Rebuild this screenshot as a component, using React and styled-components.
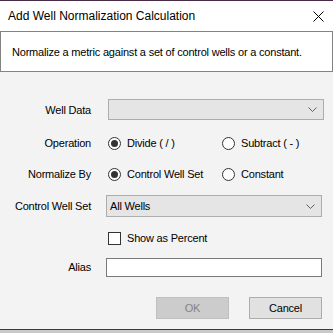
import styled, { createGlobalStyle } from 'styled-components';

const GlobalStyle = createGlobalStyle`
  html, body {
    margin: 0;
    padding: 0;
    background: #c9c9c9;
    overflow: hidden;
  }
  body {
    font-family: "Liberation Sans", Arial, sans-serif;
    font-size: 11px;
    letter-spacing: -0.2px;
    color: #000;
  }
`;

export default function App() {
  return (
    <>
      <GlobalStyle />
      <Window>
        <TitleBar>
          <Title>Add Well Normalization Calculation</Title>
          <CloseButton aria-label="Close">
            <svg width="11" height="11" viewBox="0 0 11 11">
              <path d="M0.5 0.5 L10.5 10.5 M10.5 0.5 L0.5 10.5" stroke="#000" strokeWidth="1" />
            </svg>
          </CloseButton>
        </TitleBar>

        <Description>Normalize a metric against a set of control wells or a constant.</Description>

        <Body>
          <Row $top={27} $height={21}>
            <Label>Well Data</Label>
            <Combo $shift={2} />
          </Row>

          <Row $top={13} $height={20}>
            <Label>Operation</Label>
            <RadioGroup>
              <Radio label="Divide ( / )" checked />
              <Radio label="Subtract ( - )" />
            </RadioGroup>
          </Row>

          <Row $top={11} $height={20}>
            <Label>Normalize By</Label>
            <RadioGroup>
              <Radio label="Control Well Set" checked />
              <Radio label="Constant" />
            </RadioGroup>
          </Row>

          <Row $top={11} $height={22}>
            <Label>Control Well Set</Label>
            <Combo value="All Wells" />
          </Row>

          <Row $top={11} $height={20}>
            <span />
            <Option $shift={2}>
              <CheckBox />
              <span>Show as Percent</span>
            </Option>
          </Row>

          <Row $top={9} $height={20}>
            <Label>Alias</Label>
            <TextBox />
          </Row>

          <ButtonBar>
            <Button disabled>OK</Button>
            <Button>Cancel</Button>
          </ButtonBar>
        </Body>
      </Window>
    </>
  );
}

function Combo({ value, $shift = 0 }) {
  return (
    <ComboBox $shift={$shift}>
      <span>{value}</span>
      <svg width="9" height="5" viewBox="0 0 9 5">
        <path d="M0.5 0.5 L4.5 4.5 L8.5 0.5" fill="none" stroke="#606060" strokeWidth="1" />
      </svg>
    </ComboBox>
  );
}

function Radio({ label, checked }) {
  return (
    <Option $shift={2}>
      <RadioDot $checked={checked} />
      <span>{label}</span>
    </Option>
  );
}

const Window = styled.div`
  height: 330px;
  border-top: 1px solid #4a2b47;
  border-bottom: 1px solid #3a3a3a;
  background: #f3f3f3;
  display: flex;
  flex-direction: column;
  box-sizing: border-box;
  width: 333px;
`;

const TitleBar = styled.div`
  height: 30px;
  background: #fff;
  display: flex;
  align-items: center;
  justify-content: space-between;
  padding: 0 9px 0 8px;
`;

const Title = styled.div`
  font-size: 12px;
  letter-spacing: 0;
`;

const CloseButton = styled.div`
  width: 11px;
  height: 11px;
  display: flex;
  margin-top: 1px;
`;

const Description = styled.div`
  height: 39px;
  border: 1px solid #838383;
  background: #fff;
  display: flex;
  align-items: center;
  padding-left: 11px;
`;

const Body = styled.div`
  flex: 1;
  display: flex;
  flex-direction: column;
  padding-right: 11px;
`;

const Row = styled.div`
  display: grid;
  grid-template-columns: 91px 1fr;
  column-gap: 15px;
  align-items: center;
  height: ${p => p.$height}px;
  margin-top: ${p => p.$top}px;
`;

const Label = styled.span`
  text-align: right;
  white-space: nowrap;
`;

const ComboBox = styled.div`
  height: 100%;
  box-sizing: border-box;
  margin-left: ${p => p.$shift}px;
  margin-right: -${p => p.$shift}px;
  border: 1px solid #adadad;
  background: #e5e5e5;
  display: flex;
  align-items: center;
  justify-content: space-between;
  padding: 0 6px 0 3px;

  svg {
    flex-shrink: 0;
  }
`;

const RadioGroup = styled.div`
  display: grid;
  grid-template-columns: 114px 1fr;
  align-items: center;
`;

const Option = styled.label`
  display: flex;
  align-items: center;
  gap: 6px;
  margin-left: ${p => p.$shift}px;
  white-space: nowrap;
`;

const RadioDot = styled.span`
  width: 13px;
  height: 13px;
  box-sizing: border-box;
  border-radius: 50%;
  border: 1px solid #333;
  background: #fff;
  display: flex;
  align-items: center;
  justify-content: center;

  &::after {
    content: '';
    width: 7px;
    height: 7px;
    border-radius: 50%;
    background: ${p => (p.$checked ? '#333' : 'transparent')};
  }
`;

const CheckBox = styled.span`
  width: 13px;
  height: 13px;
  box-sizing: border-box;
  border: 1px solid #333;
  background: #fff;
`;

const TextBox = styled.div`
  height: 19px;
  box-sizing: border-box;
  border: 1px solid #7a7a7a;
  background: #fff;
`;

const ButtonBar = styled.div`
  display: flex;
  justify-content: flex-end;
  gap: 20px;
  margin-top: 20px;
`;

const Button = styled.button`
  width: 73px;
  height: 22px;
  box-sizing: border-box;
  font-family: inherit;
  font-size: 11px;
  letter-spacing: inherit;
  padding: 0;
  border: 1px solid ${p => (p.disabled ? '#bfbfbf' : '#adadad')};
  background: ${p => (p.disabled ? '#cccccc' : '#e1e1e1')};
  color: ${p => (p.disabled ? '#838383' : '#000')};
`;
